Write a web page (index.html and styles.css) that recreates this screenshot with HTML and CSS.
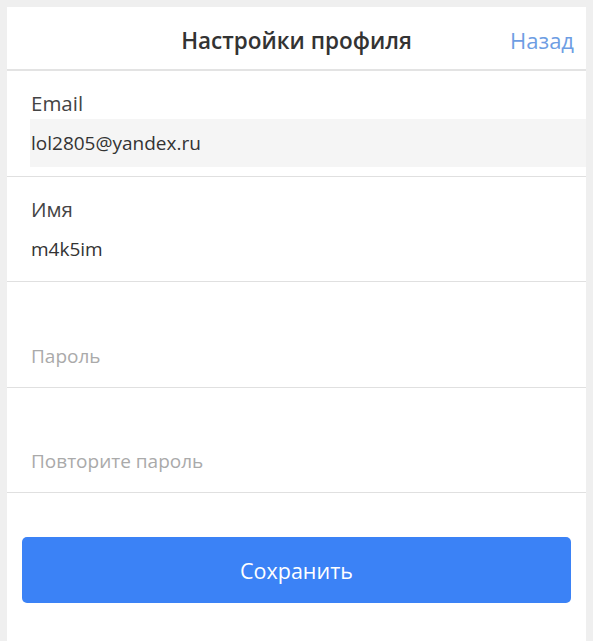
FILE: index.html
```html
<!DOCTYPE html>
<html lang="ru">
<head>
<meta charset="utf-8">
<title>Настройки профиля</title>
<link rel="stylesheet" href="styles.css">
</head>
<body>
<div class="card">
  <header class="header">
    <h1 class="title">Настройки профиля</h1>
    <a class="back" href="#">Назад</a>
  </header>
  <form class="form">
    <div class="row">
      <label class="label">Email</label>
      <div class="input input-disabled">lol2805@yandex.ru</div>
    </div>
    <div class="row">
      <label class="label">Имя</label>
      <div class="input">m4k5im</div>
    </div>
    <div class="row">
      <label class="label"></label>
      <div class="input placeholder">Пароль</div>
    </div>
    <div class="row">
      <label class="label"></label>
      <div class="input placeholder">Повторите пароль</div>
    </div>
    <div class="actions">
      <button class="btn" type="button">Сохранить</button>
    </div>
  </form>
</div>
</body>
</html>
```
FILE: styles.css
```css
* { box-sizing: border-box; }
html, body { height: 100%; }
body {
  margin: 0;
  padding: 7px 7px 0 7px;
  background: #efefef;
  font-family: "Open Sans", "Noto Sans", sans-serif;
}
.card {
  background: #fff;
  min-height: 100%;
  display: flex;
  flex-direction: column;
}
.header {
  position: relative;
  height: 64px;
  padding-top: 4px;
  border-bottom: 2px solid #e3e3e3;
  display: flex;
  align-items: center;
  justify-content: center;
}
.title {
  margin: 0;
  font-size: 22.5px;
  font-weight: 600;
  color: #333;
}
.back {
  position: absolute;
  right: 12px;
  top: 50%;
  transform: translateY(-45%);
  font-size: 22px;
  color: #6d9de3;
  text-decoration: none;
}
.form {
  display: flex;
  flex-direction: column;
}
.row {
  padding: 20px 0 8.5px 23px;
  border-bottom: 1px solid #e0e0e0;
  display: flex;
  flex-direction: column;
  gap: 4px;
}
.label {
  font-size: 20.5px;
  line-height: 24px;
  height: 24px;
  color: #444;
  padding-left: 1px;
}
.input {
  height: 48px;
  display: flex;
  align-items: center;
  font-size: 19px;
  color: #333;
  padding-left: 1px;
}
.input-disabled { background: #f5f5f5; }
.placeholder { color: #aaa; padding-top: 3px; }
.actions {
  padding: 44px 15px 0 15px;
}
.btn {
  width: 100%;
  height: 66px;
  border: none;
  border-radius: 5px;
  background: #3b82f6;
  color: #fff;
  font-family: "Open Sans", "Noto Sans", sans-serif;
  font-size: 21.5px;
}
```
